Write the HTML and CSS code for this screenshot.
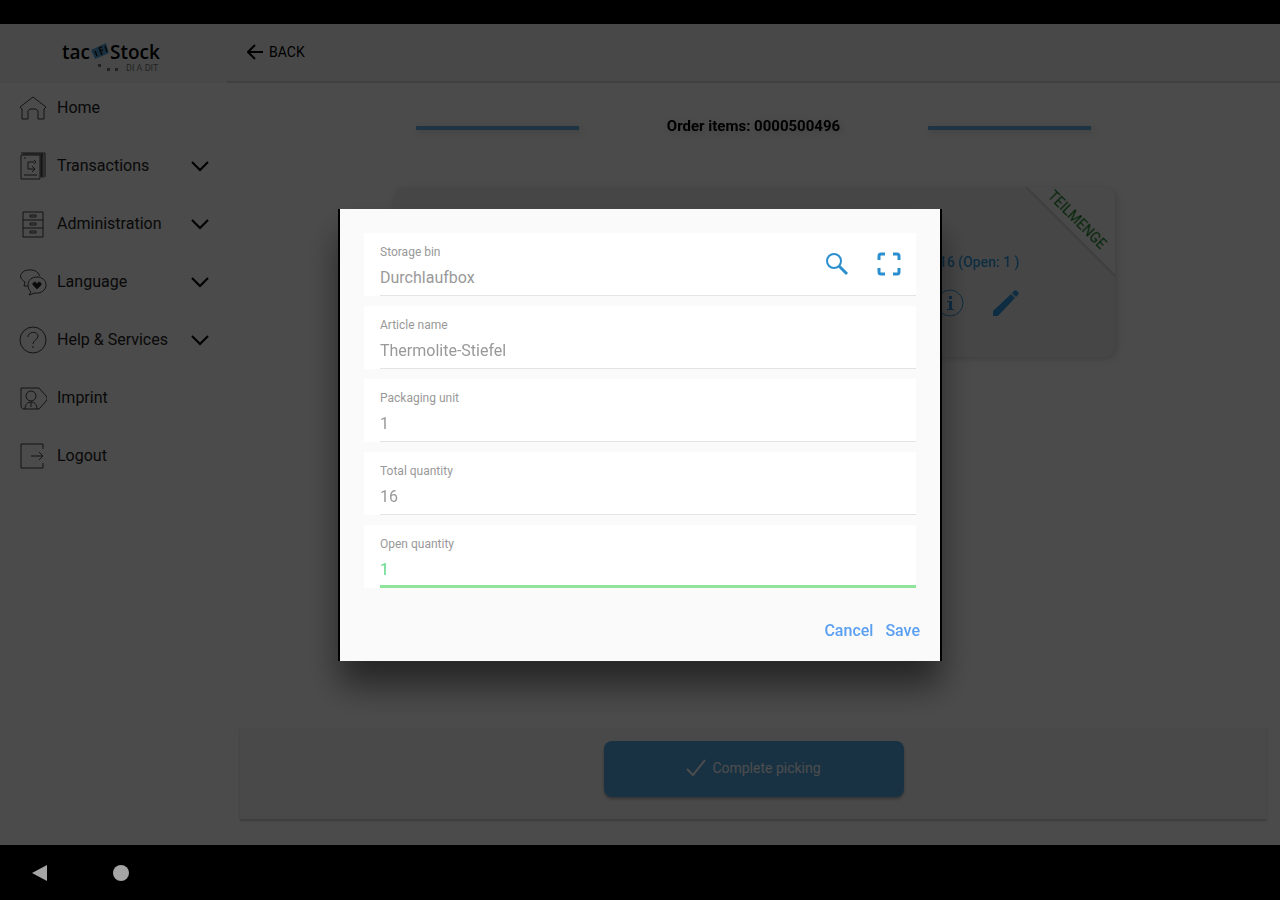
FILE: index.html
```html
<!DOCTYPE html>
<html lang="en">

<head>
    <meta charset="UTF-8">
    <meta name="viewport" content="width=device-width, initial-scale=1.0">
    <title>tac Stock - Order items</title>
    <link rel="stylesheet" href="styles.css">
</head>

<body>
    <div class="status-bar"></div>

    <div class="app">
        <aside class="sidebar">
            <div class="logo">
                <div class="logo-name">
                    <span>tac</span>
                    <svg width="20" height="20" viewBox="0 0 20 20">
                        <path d="M1 8l15-7 3 10-14 6z" fill="#4f9fd0" />
                        <path d="M5 9l2 5M9 6l3 7M9 6l3-1M10 9l3-1M15 4l2 6" stroke="#222" stroke-width="1.5" fill="none" />
                    </svg>
                    <span>Stock</span>
                </div>
                <div class="logo-sub">
                    <svg width="24" height="8" viewBox="0 0 24 8">
                        <path d="M0 0h3v3H0zM9 4h3v3H9zM17 4h3v3h-3z" fill="#777" />
                    </svg>
                    <span>DI A DIT</span>
                </div>
            </div>
            <nav class="menu">
                <a class="menu-item" href="#">
                    <svg class="icon" viewBox="0 0 28 28">
                        <path d="M1 13L14 3l13 10-2 2v10h-6v-8l-2-2h-6l-2 2v8H3V15z" />
                    </svg>
                    <span>Home</span>
                </a>
                <a class="menu-item" href="#">
                    <svg class="icon" viewBox="0 0 28 28">
                        <path d="M2 3h19v24H2zM2 1h24v24M4 2h20v24M5 6h2M5 23h13M15 10H9v7h7M13 14l3 3-3 3M15 8l2 2-2 2" />
                        <path d="M22.500 2v23" stroke-width="2" />
                    </svg>
                    <span>Transactions</span>
                    <svg class="chevron" viewBox="0 0 18 12"><path d="M1 2l8 8 8-8" /></svg>
                </a>
                <a class="menu-item" href="#">
                    <svg class="icon" viewBox="0 0 28 28">
                        <path d="M4 2h20v25H4zM4 10h20M4 18h20M11 5h6v2h-6zM11 13h6v2h-6zM11 21h6v2h-6z" />
                    </svg>
                    <span>Administration</span>
                    <svg class="chevron" viewBox="0 0 18 12"><path d="M1 2l8 8 8-8" /></svg>
                </a>
                <a class="menu-item" href="#">
                    <svg class="icon" viewBox="0 0 28 28">
                        <path d="M9 18H5l1-4C1 11 0 7 4 4c3-3 12-3 15 1l2 3" />
                        <path d="M12 24l-2 3 6-2c6 1 11-3 11-8s-4-8-9-8-9 3-9 8c0 3 1 5 3 7z" />
                        <path d="M18 21l-4-4c-1-3 3-4 4-1 1-3 5-2 4 1z" fill="#222" />
                    </svg>
                    <span>Language</span>
                    <svg class="chevron" viewBox="0 0 18 12"><path d="M1 2l8 8 8-8" /></svg>
                </a>
                <a class="menu-item" href="#">
                    <svg class="icon" viewBox="0 0 28 28">
                        <circle cx="14" cy="14" r="13" />
                        <path d="M9 11c0-6 10-6 10-1 0 4-5 4-5 8M14 20v2" />
                    </svg>
                    <span>Help &amp; Services</span>
                    <svg class="chevron" viewBox="0 0 18 12"><path d="M1 2l8 8 8-8" /></svg>
                </a>
                <a class="menu-item" href="#">
                    <svg class="icon" viewBox="0 0 28 28">
                        <path d="M2 4h18l8 9v3l-8 9H4l-2-2z" />
                        <circle cx="12" cy="12" r="5" />
                        <path d="M6 25c0-5 3-7 6-7s6 2 6 7M12 18v5" />
                    </svg>
                    <span>Imprint</span>
                </a>
                <a class="menu-item" href="#">
                    <svg class="icon" viewBox="0 0 28 28">
                        <path d="M24 7V2H2v24h22v-5M12 14h12M20 10l4 4-4 4" />
                    </svg>
                    <span>Logout</span>
                </a>
            </nav>
        </aside>

        <main class="content">
            <header class="toolbar">
                <button class="back" type="button">
                    <svg width="16" height="16" viewBox="0 0 16 16"><path d="M8 1L1 8l7 7M1 8h15" /></svg>
                    BACK
                </button>
            </header>

            <section class="orders">
                <div class="title-row">
                    <span class="line"></span>
                    <h1>Order items: 0000500496</h1>
                    <span class="line"></span>
                </div>
                <article class="order-card">
                    <div class="ribbon">TEILMENGE</div>
                    <div class="amount">16 (Open: 1 )</div>
                    <div class="card-actions">
                        <button type="button" aria-label="Info">
                            <svg width="28" height="28" viewBox="0 0 28 28">
                                <circle cx="14" cy="14" r="13" fill="none" stroke="currentColor" />
                                <path d="M13 7h3v3h-3zM11 12h5v8h2v1h-7v-1h2v-7h-2z" fill="currentColor" />
                            </svg>
                        </button>
                        <button type="button" aria-label="Edit">
                            <svg width="28" height="28" viewBox="0 0 28 28">
                                <path d="M1 22L19 5l4 4L6 27H1zM20 4l2-2c1-1 2-1 3 0l1 1c1 1 1 2 0 3l-2 2z" fill="currentColor" />
                            </svg>
                        </button>
                    </div>
                </article>
            </section>

            <footer class="footer-card">
                <button class="complete" type="button">
                    <svg width="20" height="20" viewBox="0 0 20 20"><path d="M1 11l6 6L19 2" /></svg>
                    Complete picking
                </button>
            </footer>
        </main>

        <div class="backdrop">
            <form class="modal" role="dialog" aria-label="Edit item">
                <div class="field">
                    <div class="field-body">
                        <div class="field-text">
                            <label for="bin">Storage bin</label>
                            <input id="bin" type="text" value="Durchlaufbox" readonly>
                        </div>
                        <button type="button" aria-label="Search">
                            <svg width="24" height="24" viewBox="0 0 24 24">
                                <circle cx="9" cy="9" r="7" />
                                <path d="M14 14l8 8" stroke-width="3" />
                            </svg>
                        </button>
                        <button type="button" aria-label="Scan">
                            <svg width="24" height="24" viewBox="0 0 24 24">
                                <path d="M2 8V4q0-2 2-2h4M16 2h4q2 0 2 2v4M22 16v4q0 2-2 2h-4M8 22H4q-2 0-2-2v-4" stroke-width="3" />
                            </svg>
                        </button>
                    </div>
                </div>
                <div class="field">
                    <div class="field-body">
                        <div class="field-text">
                            <label for="article">Article name</label>
                            <input id="article" type="text" value="Thermolite-Stiefel" readonly>
                        </div>
                    </div>
                </div>
                <div class="field">
                    <div class="field-body">
                        <div class="field-text">
                            <label for="unit">Packaging unit</label>
                            <input id="unit" type="text" value="1" readonly>
                        </div>
                    </div>
                </div>
                <div class="field">
                    <div class="field-body">
                        <div class="field-text">
                            <label for="total">Total quantity</label>
                            <input id="total" type="text" value="16" readonly>
                        </div>
                    </div>
                </div>
                <div class="field active">
                    <div class="field-body">
                        <div class="field-text">
                            <label for="open">Open quantity</label>
                            <input id="open" type="text" value="1">
                        </div>
                    </div>
                </div>
                <div class="modal-actions">
                    <button type="button">Cancel</button>
                    <button type="submit">Save</button>
                </div>
            </form>
        </div>
    </div>

    <div class="nav-bar">
        <svg width="16" height="18" viewBox="0 0 16 18"><path d="M0 9L15 1v16z" fill="#a5a5a5" /></svg>
        <svg width="16" height="16" viewBox="0 0 16 16"><circle cx="8" cy="8" r="8" fill="#a5a5a5" /></svg>
    </div>
</body>

</html>
```
FILE: styles.css
```css
* {
    box-sizing: border-box;
}

body {
    margin: 0;
    min-height: 100vh;
    display: flex;
    flex-direction: column;
    background-color: #000;
    color: #000;
    font-family: Roboto, "Liberation Sans", sans-serif;
}

button {
    padding: 0;
    border: none;
    background: transparent;
    color: inherit;
    font-family: inherit;
}

svg {
    display: block;
    flex-shrink: 0;
}

.status-bar {
    height: 24px;
}

.app {
    position: relative;
    flex: 1;
    display: flex;
    background-color: #fafafa;
}

/* sidebar */
.sidebar {
    width: 227px;
}

.logo {
    height: 59px;
    padding: 16px 0 0 62px;
    background-color: #f2f2f2;
    border-bottom: 1px solid #eee;
}

.logo-name {
    display: flex;
    align-items: center;
    height: 24px;
    font-family: "Open Sans", sans-serif;
    font-size: 19px;
    font-weight: 600;
}

.logo-sub {
    display: flex;
    gap: 4px;
    padding-left: 36px;
    font-size: 9px;
    line-height: 8px;
    color: #777;
}

.menu {
    display: flex;
    flex-direction: column;
    gap: 8px;
}

.menu-item {
    display: flex;
    align-items: center;
    height: 50px;
    padding: 0 18px 0 19px;
    gap: 10px;
    color: #222;
    font-size: 16px;
    text-decoration: none;
}

.menu-item span {
    flex: 1;
    padding-bottom: 2px;
}

.icon {
    width: 28px;
    height: 28px;
    fill: none;
    stroke: #444;
    stroke-width: 1;
}

.chevron {
    width: 18px;
    height: 12px;
    fill: none;
    stroke: #000;
    stroke-width: 2;
}

/* content */
.content {
    flex: 1;
    display: flex;
    flex-direction: column;
}

.toolbar {
    display: flex;
    align-items: center;
    height: 59px;
    padding: 0 20px 2px;
    background-color: #f2f2f2;
    border-bottom: 2px solid #d8d8d8;
}

.back {
    display: flex;
    align-items: center;
    gap: 6px;
    font-size: 14px;
}

.back svg {
    fill: none;
    stroke: #000;
    stroke-width: 2;
}

.orders {
    flex: 1;
    width: 100%;
    max-width: 768px;
    margin: 0 auto;
    padding-top: 33px;
}

.title-row {
    display: grid;
    grid-template-columns: 1fr 1fr 1fr;
    align-items: center;
    justify-items: center;
    height: 24px;
}

.title-row h1 {
    margin: 0;
    padding-bottom: 4px;
    font-size: 15px;
    font-weight: 700;
    white-space: nowrap;
}

.line {
    width: 64%;
    height: 4px;
    background-color: #6aaede;
}

.order-card {
    position: relative;
    overflow: hidden;
    display: flex;
    flex-direction: column;
    align-items: flex-end;
    height: 170px;
    margin: 47px 23px 0;
    padding: 66px 95px 0 0;
    border-radius: 12px;
    background-color: #ececec;
    color: #2f98dc;
}

.orders {
    filter: drop-shadow(2px 2px 3px rgba(0, 0, 0, 0.15));
}

.amount {
    font-size: 14px;
    font-weight: 500;
    line-height: 18px;
}

.card-actions {
    display: flex;
    gap: 28px;
    margin-top: 18px;
}

.ribbon {
    position: absolute;
    top: -12px;
    right: -55px;
    width: 160px;
    height: 64px;
    padding-top: 40px;
    background-color: #f6f6f6;
    border-bottom: 2px solid #d4d4d4;
    color: #0f7a1c;
    font-size: 14px;
    line-height: 20px;
    text-align: center;
    transform: rotate(45deg);
}

.footer-card {
    display: flex;
    justify-content: center;
    margin: 0 13px 26px;
    padding: 13px 0 22px;
    background-color: #f4f4f4;
    box-shadow: 0 2px 2px rgba(0, 0, 0, 0.2);
}

.complete {
    display: flex;
    align-items: center;
    justify-content: center;
    gap: 6px;
    width: 300px;
    height: 56px;
    padding-bottom: 2px;
    border-radius: 8px;
    background-color: #50a7e4;
    box-shadow: 0 2px 3px rgba(0, 0, 0, 0.3);
    color: #fff;
    font-size: 14px;
}

.complete svg {
    fill: none;
    stroke: #fff;
    stroke-width: 2;
}

/* modal */
.backdrop {
    position: absolute;
    inset: 0;
    display: flex;
    align-items: center;
    justify-content: center;
    background-color: rgba(0, 0, 0, 0.7);
}

.modal {
    display: flex;
    flex-direction: column;
    gap: 10px;
    width: 600px;
    padding: 24px 24px 20px;
    background-color: #fafafa;
    box-shadow: 2px 0 0 #000, -2px 0 0 #000, 0 24px 32px rgba(0, 0, 0, 0.5);
}

.field {
    padding-left: 16px;
    background-color: #fff;
}

.field-body {
    display: flex;
    align-items: center;
    gap: 28px;
    height: 63px;
    padding-right: 15px;
    border-bottom: 1px solid #e4e4e4;
}

.field-text {
    flex: 1;
    display: flex;
    flex-direction: column;
    gap: 6px;
    padding-top: 5px;
}

.field label {
    color: #999;
    font-size: 12px;
    line-height: 16px;
}

.field input {
    width: 100%;
    height: 22px;
    padding: 0;
    border: none;
    outline: none;
    background: transparent;
    color: #999;
    font-family: inherit;
    font-size: 16px;
}

.field svg {
    fill: none;
    stroke: #2b8fcf;
    stroke-width: 2;
}

.field.active .field-body {
    border-bottom: 3px solid #8fe39b;
}

.field.active .field-text {
    padding-top: 7px;
}

.field.active input {
    color: #5fd88a;
}

.modal-actions {
    display: flex;
    justify-content: flex-end;
    gap: 12px;
    margin: 23px -4px 0 0;
}

.modal-actions button {
    color: #5a9ff0;
    font-size: 16px;
    font-weight: 500;
    line-height: 20px;
}

/* system navigation */
.nav-bar {
    display: flex;
    align-items: center;
    gap: 65px;
    height: 55px;
    padding-left: 32px;
}
```
